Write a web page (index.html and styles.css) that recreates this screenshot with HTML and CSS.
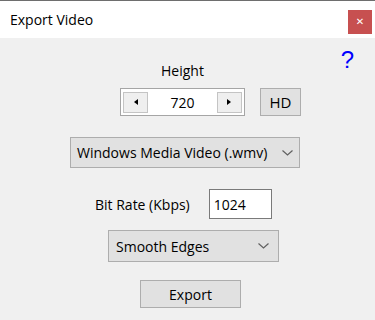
FILE: index.html
```html
<!DOCTYPE html>
<html lang="en">

<head>
    <meta charset="UTF-8">
    <meta name="viewport" content="width=device-width, initial-scale=1.0">
    <title>Export Video</title>
    <link rel="stylesheet" href="styles.css">
</head>

<body>

    <div class="dialog">
        <div class="titlebar">
            <span class="title">Export Video</span>
            <button class="close">&#x2715;</button>
        </div>

        <div class="content">
            <a class="help" href="#">?</a>

            <div class="height-block">
                <div class="label">Height</div>
                <div class="height-row">
                    <div class="spinner">
                        <button class="spin-btn"><span class="arrow left"></span></button>
                        <span class="spin-value">720</span>
                        <button class="spin-btn"><span class="arrow right"></span></button>
                    </div>
                    <button class="btn hd">HD</button>
                </div>
            </div>

            <div class="select format">
                <span>Windows Media Video (.wmv)</span>
                <svg width="11" height="6" viewBox="0 0 11 6"><polyline points="0.5,0.5 5.5,5 10.5,0.5" fill="none" stroke="#606060" stroke-width="1.2"/></svg>
            </div>

            <div class="bitrate-row">
                <span class="label">Bit Rate (Kbps)</span>
                <input type="text" class="field" value="1024">
            </div>

            <div class="select smoothing">
                <span>Smooth Edges</span>
                <svg width="11" height="6" viewBox="0 0 11 6"><polyline points="0.5,0.5 5.5,5 10.5,0.5" fill="none" stroke="#606060" stroke-width="1.2"/></svg>
            </div>

            <button class="btn export">Export</button>
        </div>
    </div>

</body>

</html>
```

FILE: styles.css
```css
body {
    margin: 0;
    padding: 0;
    background-color: #f0f0f0;
    font-family: "Open Sans", "Noto Sans", Arial, sans-serif;
    font-size: 14px;
    color: #000000;
}

.dialog {
    width: 375px;
    height: 320px;
    border-top: 1px solid #6e6e6e;
    box-sizing: border-box;
}

.titlebar {
    height: 37px;
    background-color: #ffffff;
    display: flex;
    align-items: center;
    justify-content: space-between;
    padding-left: 10px;
    padding-right: 3px;
}

.title {
    font-size: 14px;
}

.close {
    width: 24px;
    height: 24px;
    border: none;
    background-color: #c75050;
    color: white;
    font-size: 10px;
    font-weight: bold;
    padding: 0;
    margin-top: 4px;
    font-family: "DejaVu Sans", sans-serif;
}

.content {
    position: relative;
    padding-top: 23px;
    display: flex;
    flex-direction: column;
    align-items: flex-start;
}

.help {
    position: absolute;
    right: 21px;
    top: 8px;
    color: #0000ff;
    text-decoration: none;
    font-family: "Liberation Sans", Arial, sans-serif;
    font-size: 24px;
}

.height-block {
    margin-left: 120px;
}

.height-block .label {
    width: 125px;
    text-align: center;
    line-height: 20px;
}

.height-row {
    display: flex;
    gap: 15px;
    margin-top: 7px;
}

.spinner {
    width: 125px;
    height: 28px;
    box-sizing: border-box;
    border: 1px solid #a5a5a5;
    background-color: #ffffff;
    display: flex;
    align-items: center;
    justify-content: space-between;
    padding: 0 2px;
}

.spin-btn {
    width: 25px;
    height: 21px;
    padding: 0;
    border: 1px solid #c4c4c4;
    background-color: #efefef;
    display: flex;
    align-items: center;
    justify-content: center;
}

.arrow {
    width: 0;
    height: 0;
    border-top: 3px solid transparent;
    border-bottom: 3px solid transparent;
}

.arrow.left {
    border-right: 4px solid #000000;
}

.arrow.right {
    border-left: 4px solid #000000;
}

.spin-value {
    font-size: 14px;
}

.btn {
    background-color: #e1e1e1;
    border: 1px solid #adadad;
    font-family: inherit;
    font-size: 14px;
    color: #000000;
    padding: 0;
}

.hd {
    width: 41px;
    height: 28px;
    font-size: 15px;
}

.select {
    box-sizing: border-box;
    background-color: #e1e1e1;
    border: 1px solid #adadad;
    display: flex;
    align-items: center;
    justify-content: space-between;
    padding-left: 6px;
}

.format {
    margin-left: 70px;
    margin-top: 21px;
    width: 230px;
    height: 31px;
    padding-right: 6px;
}

.bitrate-row {
    margin-left: 95px;
    margin-top: 21px;
    display: flex;
    align-items: center;
    gap: 19px;
}

.field {
    width: 63px;
    height: 30px;
    box-sizing: border-box;
    border: 1px solid #7a7a7a;
    font-family: inherit;
    font-size: 14px;
    padding: 0 4px;
    background-color: #ffffff;
}

.smoothing {
    margin-left: 108px;
    margin-top: 11px;
    width: 171px;
    height: 32px;
    padding-left: 7px;
    padding-right: 9px;
}

.export {
    margin-left: 140px;
    margin-top: 18px;
    width: 101px;
    height: 28px;
}
```
